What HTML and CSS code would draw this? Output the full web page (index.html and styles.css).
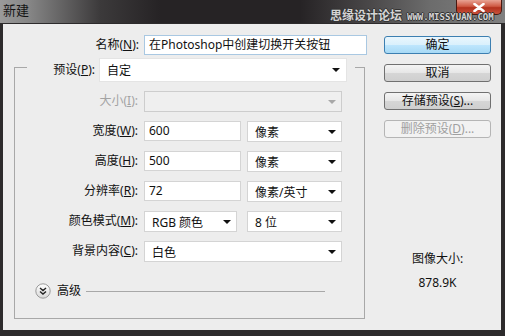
FILE: index.html
```html
<!DOCTYPE html>
<html lang="zh-CN">
<head>
    <meta charset="UTF-8">
    <meta name="viewport" content="width=device-width, initial-scale=1.0">
    <title>新建</title>
    <link rel="stylesheet" href="styles.css">
</head>
<body>
    <div class="titlebar">
        <span class="title">新建</span>
        <span class="close">
            <svg width="12" height="9" viewBox="0 0 12 9"><path d="M1.5 1 L10.5 8 M10.5 1 L1.5 8" stroke="#fff" stroke-width="2.6" stroke-linecap="round"/></svg>
        </span>
        <div class="watermark"><span class="wm-cn">思缘设计论坛</span><span class="wm-en">WWW.MISSYUAN.COM</span></div>
    </div>
    <div class="panel">
        <div class="form">
            <div class="name-row">
                <span class="label name-label">名称(<u>N</u>):</span>
                <div class="input name-input">在Photoshop中创建切换开关按钮</div>
            </div>
            <div class="group">
                <div class="preset">
                    <span class="label preset-label">预设(<u>P</u>):</span>
                    <div class="select preset-select"><span>自定</span><i class="arrow"></i></div>
                </div>
                <div class="grid">
                    <span class="label disabled">大小(<u>I</u>):</span>
                    <div class="select span2 is-disabled"><span></span><i class="arrow"></i></div>

                    <span class="label">宽度(<u>W</u>):</span>
                    <div class="input">600</div>
                    <div class="select"><span>像素</span><i class="arrow"></i></div>

                    <span class="label">高度(<u>H</u>):</span>
                    <div class="input">500</div>
                    <div class="select"><span>像素</span><i class="arrow"></i></div>

                    <span class="label">分辨率(<u>R</u>):</span>
                    <div class="input">72</div>
                    <div class="select"><span>像素/英寸</span><i class="arrow"></i></div>

                    <span class="label">颜色模式(<u>M</u>):</span>
                    <div class="select narrow"><span>RGB 颜色</span><i class="arrow"></i></div>
                    <div class="select"><span>8 位</span><i class="arrow"></i></div>

                    <span class="label">背景内容(<u>C</u>):</span>
                    <div class="select span2"><span>白色</span><i class="arrow"></i></div>
                </div>
                <div class="advanced">
                    <svg class="adv-icon" width="16" height="16" viewBox="0 0 16 16">
                        <defs>
                            <linearGradient id="advg" x1="0" y1="0" x2="0" y2="1">
                                <stop offset="0" stop-color="#ffffff"/>
                                <stop offset="1" stop-color="#d8d8d8"/>
                            </linearGradient>
                        </defs>
                        <circle cx="8" cy="8" r="7.2" fill="url(#advg)" stroke="#9a9a9a" stroke-width="1"/>
                        <path d="M5 5 L8 7.5 L11 5 M5 8.5 L8 11 L11 8.5" fill="none" stroke="#222" stroke-width="1.4"/>
                    </svg>
                    <span class="adv-text">高级</span>
                    <span class="adv-line"></span>
                </div>
            </div>
        </div>
        <div class="side">
            <div class="btn btn-default">确定</div>
            <div class="btn">取消</div>
            <div class="btn">存储预设(<u>S</u>)...</div>
            <div class="btn btn-disabled">删除预设(<u>D</u>)...</div>
            <div class="size-info">
                <div>图像大小:</div>
                <div class="size-value">878.9K</div>
            </div>
        </div>
    </div>
</body>
</html>
```

FILE: styles.css
```css
html, body {
    margin: 0;
    padding: 0;
}
body {
    width: 505px;
    height: 336px;
    overflow: hidden;
    background: #2d2b2c;
    font-family: "Noto Sans", "Noto Sans CJK SC", sans-serif;
    font-size: 12px;
    color: #111;
}
u {
    text-underline-offset: 1px;
}
.titlebar {
    position: relative;
    display: flex;
    align-items: flex-start;
    height: 23px;
    background: linear-gradient(90deg, #9a9a9a 0, #858585 30px, #3c3a3b 100px, #262325 160px, #262325 300px, #4a4849 370px, #6c6c6c 430px, #808080 505px);
}
.title {
    margin: 2px 0 0 3px;
    font-size: 13px;
    line-height: 16px;
    color: #141414;
}
.close {
    display: flex;
    align-items: center;
    justify-content: center;
    margin-left: auto;
    margin-right: 3px;
    width: 46px;
    height: 15px;
    box-sizing: border-box;
    border: 1px solid #4a1810;
    border-top: none;
    border-radius: 0 0 5px 5px;
    background: linear-gradient(#e8a394, #cf5a44 45%, #b3311d 55%, #c9523b);
}
.watermark {
    position: absolute;
    left: 330px;
    top: 8px;
    display: flex;
    align-items: flex-end;
    gap: 5px;
    color: #d4d4d4;
    text-shadow: -1px 0 #333, 1px 0 #333, 0 -1px #333, 0 1px #333;
}
.wm-cn {
    font-size: 12px;
    line-height: 15px;
    font-weight: bold;
}
.wm-en {
    font-family: "DejaVu Sans Mono", monospace;
    font-size: 9px;
    line-height: 10px;
    font-weight: bold;
    margin-bottom: 1px;
}
.panel {
    display: flex;
    margin: 1px 4px 0 3px;
    height: 306px;
    background: #ededed;
}
.form {
    width: 370px;
}
.label {
    text-align: right;
    padding-right: 4px;
    line-height: 20px;
    white-space: nowrap;
}
.label.disabled {
    color: #a3a3a3;
}
.name-row {
    display: flex;
    margin-top: 11px;
}
.name-label {
    width: 141px;
    box-sizing: border-box;
    padding-right: 5px;
}
.input {
    height: 20px;
    box-sizing: border-box;
    padding: 0 4px;
    line-height: 18px;
    background: #fff;
    border: 1px solid #d4d4d4;
    white-space: nowrap;
}
.name-input {
    width: 223px;
    border-color: #a9c8e2;
}
.group {
    margin: 12px 0 0 11px;
    width: 351px;
    box-sizing: border-box;
    padding: 0 0 19px 12px;
    border: 1px solid #a8a8a8;
}
.preset {
    display: flex;
    width: fit-content;
    margin-top: -10px;
    padding-right: 8px;
    background: #ededed;
}
.preset-label {
    width: 72px;
    box-sizing: border-box;
    line-height: 24px;
}
.select {
    display: flex;
    align-items: center;
    justify-content: space-between;
    height: 21px;
    box-sizing: border-box;
    padding: 0 5px 0 7px;
    background: #fff;
    border: 1px solid #d4d4d4;
    white-space: nowrap;
}
.preset-select {
    width: 248px;
    height: 24px;
    padding-right: 6px;
    border-color: #e4e4e4;
}
.arrow {
    width: 0;
    height: 0;
    border-left: 4px solid transparent;
    border-right: 4px solid transparent;
    border-top: 4px solid #111;
}
.select.is-disabled {
    background: #efefef;
    border-color: #cdcdcd;
}
.select.is-disabled .arrow {
    border-top-color: #a8a8a8;
}
.grid {
    display: grid;
    grid-template-columns: 111px 97px 95px;
    grid-auto-rows: 21px;
    column-gap: 6px;
    row-gap: 9px;
    margin-top: 9px;
}
.grid .label {
    padding-right: 0;
}
.span2 {
    grid-column: span 2;
}
.narrow {
    width: 93px;
}
.advanced {
    display: flex;
    align-items: center;
    height: 16px;
    margin-top: 21px;
    padding-left: 8px;
}
.adv-text {
    margin-left: 6px;
    line-height: 16px;
}
.adv-line {
    margin-left: 5px;
    width: 239px;
    height: 1px;
    background: #a8a8a8;
}
.side {
    display: flex;
    flex-direction: column;
    margin-left: 11px;
    padding-top: 12px;
    width: 107px;
}
.btn {
    height: 18px;
    box-sizing: border-box;
    margin-bottom: 10px;
    border: 1px solid #707070;
    border-radius: 3px;
    background: linear-gradient(#f4f4f4, #e6e6e6 50%, #d6d6d6 51%, #cfcfcf);
    text-align: center;
    line-height: 16px;
}
.btn-default {
    border-color: #3c7fb1;
    background: linear-gradient(#eaf6fd, #d9f0fc 50%, #bee6fd 51%, #a7d9f5);
}
.btn-disabled {
    border-color: #b5b5b5;
    background: #f2f2f2;
    color: #a0a0a0;
}
.size-info {
    margin-top: 103px;
    text-align: center;
    line-height: 16px;
}
.size-value {
    margin-top: 8px;
}
```
